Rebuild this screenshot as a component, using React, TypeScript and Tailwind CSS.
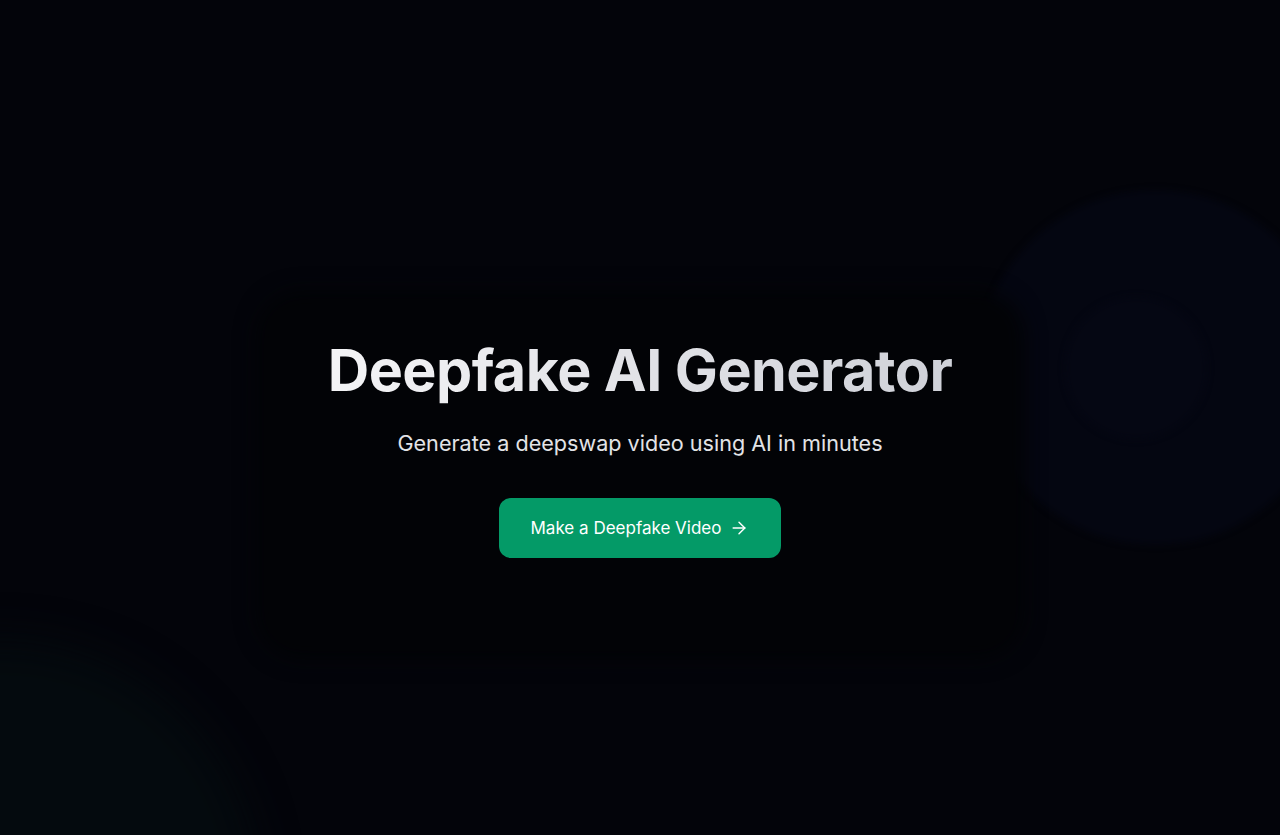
import React from 'react'
import { ArrowRight } from 'lucide-react'

export default function App() {
  return (
    <div className="relative h-[835px] w-full overflow-hidden bg-[#03040a] font-['Inter',sans-serif]">
      {/* soft background shapes */}
      <div className="pointer-events-none absolute left-[978px] top-[190px] h-[355px] w-[355px] rounded-full bg-[#040611] blur-[3px]" />
      <div className="pointer-events-none absolute left-[1065px] top-[297px] h-[142px] w-[142px] rounded-full bg-[#050713] blur-[3px]" />
      <div className="pointer-events-none absolute -left-[260px] top-[640px] h-[520px] w-[520px] rounded-full bg-[#040a0e] blur-[20px]" />
      <div className="pointer-events-none absolute left-[255px] top-[290px] h-[370px] w-[770px] rounded-[48px] bg-[#020306] blur-[10px]" />

      <main className="relative flex h-full flex-col items-center justify-center pt-[60px]">
        <h1 className="bg-gradient-to-r from-[#f4f4f6] to-[#cfd1d8] bg-clip-text pb-1 text-[57.5px] font-bold leading-[1.15] tracking-[-0.01em] text-transparent">
          Deepfake AI Generator
        </h1>
        <p className="mt-[20px] text-[21.6px] text-[#e2e3e7]">
          Generate a deepswap video using AI in minutes
        </p>
        <button className="mt-[39px] flex h-[60px] items-center gap-2 rounded-xl bg-[#049a67] px-8 text-[17px] text-white">
          Make a Deepfake Video
          <ArrowRight size={20} strokeWidth={1.75} />
        </button>
      </main>
    </div>
  )
}
